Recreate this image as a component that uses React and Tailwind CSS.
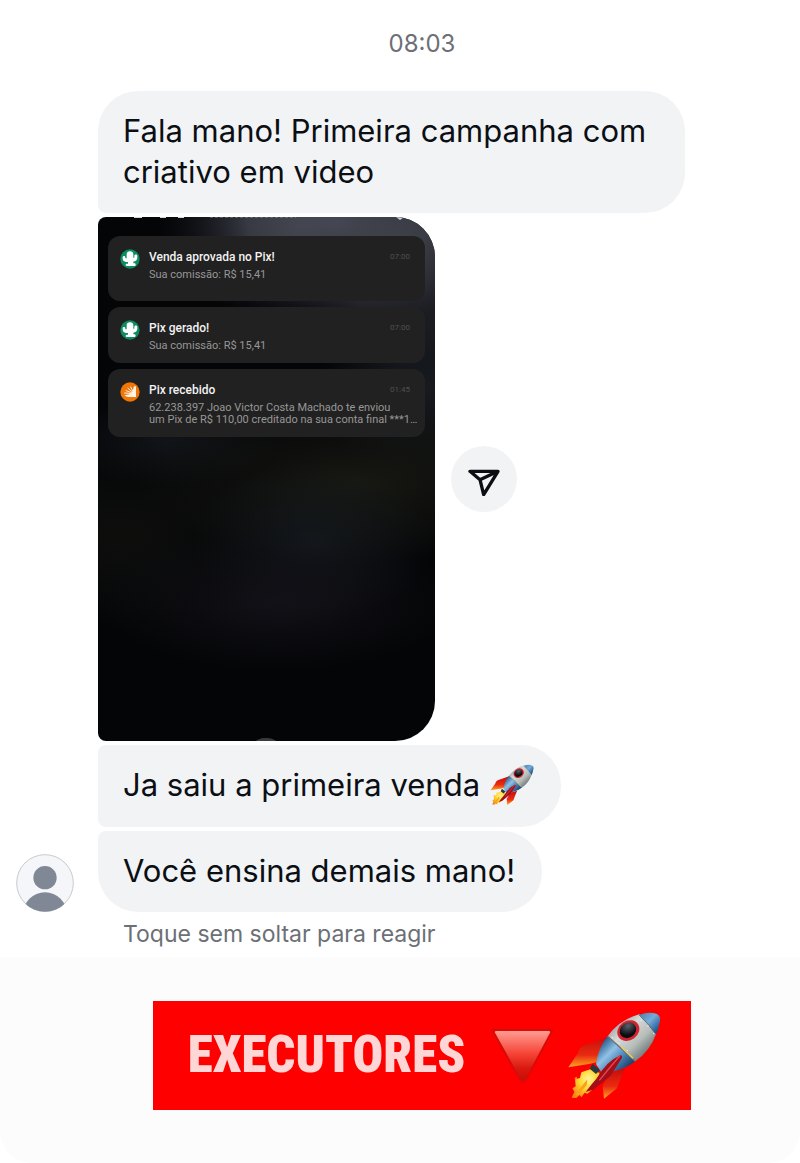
import React from 'react';

const notifications = [
    {
        icon: 'cactus',
        title: 'Venda aprovada no Pix!',
        time: '07:00',
        lines: ['Sua comissão: R$ 15,41'],
        spacing: 'pb-5',
    },
    {
        icon: 'cactus',
        title: 'Pix gerado!',
        time: '07:00',
        lines: ['Sua comissão: R$ 15,41'],
        spacing: 'pb-[11px]',
    },
    {
        icon: 'hand',
        title: 'Pix recebido',
        time: '01:45',
        lines: [
            '62.238.397 Joao Victor Costa Machado te enviou',
            'um Pix de R$ 110,00 creditado na sua conta final ***1…',
        ],
        spacing: 'pb-[11px]',
    },
];

const CactusIcon = () => (
    <svg className="size-5 shrink-0" viewBox="0 0 60 60" aria-hidden="true">
        <circle cx="30" cy="30" r="29" fill="#0c8c62" />
        <path
            d="M20 16c0-6 4-9 10-9s10 3 10 9v10h3v-6c0-5 9-5 9 0v6c0 7-5 11-12 12v5h4c4 0 4 8 0 8H20c-4 0-4-7 0-7h4v-5c-10 0-16-3-16-10v-4c0-5 8-5 8 0v3h4z"
            fill="#fff"
        />
    </svg>
);

const HandIcon = () => (
    <svg className="size-5 shrink-0" viewBox="0 0 60 60" aria-hidden="true">
        <circle cx="30" cy="30" r="29" fill="#ef7607" />
        <path d="M48 13v32H26c-5 0-9-2-13-5l15-3 10-10 4-14z" fill="#fff3e4" />
        <path
            d="M14 33l16 1M18 26l14 5M24 19l11 9M32 15l6 11"
            stroke="#fff3e4"
            strokeWidth="3"
            strokeLinecap="round"
        />
    </svg>
);

const Rocket = ({ className }) => (
    <svg className={className} viewBox="265 48 282 268" role="img" aria-label="foguete">
        <defs>
            <linearGradient id="hull" x1="380" y1="90" x2="490" y2="205" gradientUnits="userSpaceOnUse">
                <stop offset="0" stopColor="#8a9092" />
                <stop offset="0.35" stopColor="#d7dad6" />
                <stop offset="0.65" stopColor="#b7bdb9" />
                <stop offset="1" stopColor="#59676c" />
            </linearGradient>
            <linearGradient id="blue" x1="370" y1="140" x2="450" y2="220" gradientUnits="userSpaceOnUse">
                <stop offset="0" stopColor="#285c8c" />
                <stop offset="0.35" stopColor="#91c1e6" />
                <stop offset="0.65" stopColor="#4b85b9" />
                <stop offset="1" stopColor="#183b64" />
            </linearGradient>
            <linearGradient id="nose" x1="490" y1="55" x2="542" y2="105" gradientUnits="userSpaceOnUse">
                <stop offset="0" stopColor="#5187b5" />
                <stop offset="0.45" stopColor="#75acd8" />
                <stop offset="1" stopColor="#174d8b" />
            </linearGradient>
            <linearGradient id="fin" x1="0" y1="0" x2="0" y2="1">
                <stop offset="0" stopColor="#c80c0a" />
                <stop offset="0.6" stopColor="#ea2b12" />
                <stop offset="1" stopColor="#ffa71d" />
            </linearGradient>
            <radialGradient id="flame" cx="0.6" cy="0.35" r="0.7">
                <stop offset="0" stopColor="#fff59a" />
                <stop offset="0.5" stopColor="#ffd52b" />
                <stop offset="1" stopColor="#f68712" />
            </radialGradient>
            <radialGradient id="glass" cx="0.65" cy="0.25" r="0.6">
                <stop offset="0" stopColor="#59616b" />
                <stop offset="1" stopColor="#0a0c10" />
            </radialGradient>
        </defs>
        <path d="M388 126q-38 13-74 26-13 7-16 22l-29 43 62-10 25-6z" fill="url(#fin)" />
        <path d="M395 232l44-12q-12 27-24 60l-39 31-4-38z" fill="url(#fin)" />
        <path
            d="M337 222l26 12-4 24-20 28-13 10-8-3-10 14-5-7-10 9-14-1 8-18-6-10 10-6-2-21 15-4 4-17z"
            fill="url(#flame)"
        />
        <path d="M290 299l18-24 18-22-2 18-14 15-11 16zM286 250l8-5 1 8z" fill="#f9a01c" />
        <path d="M341 207l24 17-13 13-18-15z" fill="#283841" />
        <path d="M352 207q6-49 35-83l83 75q-39 31-100 36z" fill="url(#blue)" />
        <path d="M387 124q34-50 95-66l50 59q-18 52-62 82z" fill="url(#hull)" />
        <path d="M481 60q31-12 54-3 13 7 8 25-3 22-11 36-25-31-51-58z" fill="url(#nose)" />
        <path d="M481 60q28 24 51 58" fill="none" stroke="#596169" strokeWidth="2" />
        <path d="M387 124l83 75" stroke="#6e7375" strokeWidth="4" />
        <path d="M428 156l35 34" stroke="#efd05a" strokeWidth="4" />
        <g fill="#f9f7e9">
            <circle cx="401" cy="128" r="2" />
            <circle cx="421" cy="145" r="2" />
            <circle cx="446" cy="166" r="2" />
            <circle cx="488" cy="76" r="2" />
            <circle cx="508" cy="93" r="2" />
            <circle cx="525" cy="115" r="2" />
        </g>
        <ellipse cx="449" cy="107" rx="35" ry="29" transform="rotate(-35 449 107)" fill="#d12331" />
        <ellipse cx="448" cy="106" rx="26" ry="22" transform="rotate(-35 448 106)" fill="url(#glass)" />
        <path d="M425 181q8 1 4 9l-33 52-52 42-23 7q17-23 32-40 32-53 72-70z" fill="#a30e18" />
        <path d="M424 182l-34 40-28 34" fill="none" stroke="#e54a4c" strokeWidth="4" />
    </svg>
);

const RedTriangle = () => (
    <svg className="w-16 shrink-0" viewBox="30 92 194 174" role="img" aria-label="triângulo vermelho">
        <defs>
            <linearGradient id="triangle" x1="0" y1="0" x2="0" y2="1">
                <stop offset="0" stopColor="#ff9c92" />
                <stop offset="0.45" stopColor="#f64537" />
                <stop offset="0.75" stopColor="#d91910" />
                <stop offset="1" stopColor="#c90d08" />
            </linearGradient>
        </defs>
        <path d="M42 97h172q11 0 6 10l-80 149q-10 12-20 0L36 107q-5-10 6-10z" fill="#d90b06" />
        <path d="M49 104h159q7 0 3 7l-74 139q-7 10-14 0L46 111q-4-7 3-7z" fill="url(#triangle)" />
    </svg>
);

const SendIcon = () => (
    <svg className="w-8" viewBox="84 64 96 104" fill="none" stroke="#0b0f13" strokeWidth="10" strokeLinejoin="round" aria-hidden="true">
        <path d="M90 92h84l-43 70-11-45zM120 117l54-25" />
    </svg>
);

const Avatar = () => (
    <svg className="size-[58px] shrink-0" viewBox="47 45 174 174" role="img" aria-label="perfil">
        <clipPath id="face">
            <circle cx="134" cy="132" r="86" />
        </clipPath>
        <circle cx="134" cy="132" r="85" fill="#f4f6f9" stroke="#c8cacd" strokeWidth="3" />
        <g fill="#808896" clipPath="url(#face)">
            <circle cx="134" cy="116" r="35" />
            <circle cx="134" cy="226" r="66" />
        </g>
    </svg>
);

// Blurred phone wallpaper behind the notifications
const Wallpaper = () => (
    <svg className="absolute inset-0 size-full" viewBox="0 0 337 524" preserveAspectRatio="none" aria-hidden="true">
        <defs>
            <radialGradient id="glowTop">
                <stop offset="0" stopColor="#4b4d59" />
                <stop offset="0.5" stopColor="#383a43" />
                <stop offset="1" stopColor="#16181d" stopOpacity="0" />
            </radialGradient>
            <radialGradient id="glowOlive">
                <stop offset="0" stopColor="#171812" />
                <stop offset="1" stopColor="#171812" stopOpacity="0" />
            </radialGradient>
            <radialGradient id="glowSlate">
                <stop offset="0" stopColor="#171b20" />
                <stop offset="1" stopColor="#171b20" stopOpacity="0" />
            </radialGradient>
            <radialGradient id="glowPlum">
                <stop offset="0" stopColor="#121117" />
                <stop offset="1" stopColor="#121117" stopOpacity="0" />
            </radialGradient>
        </defs>
        <rect width="337" height="524" fill="#040507" />
        <ellipse cx="240" cy="5" rx="180" ry="110" fill="url(#glowTop)" />
        <ellipse cx="320" cy="60" rx="130" ry="120" fill="url(#glowTop)" opacity="0.4" />
        <ellipse cx="330" cy="170" rx="110" ry="100" fill="url(#glowSlate)" />
        <ellipse cx="70" cy="225" rx="110" ry="45" fill="url(#glowSlate)" opacity="0.7" />
        <ellipse cx="260" cy="265" rx="220" ry="80" fill="url(#glowOlive)" />
        <ellipse cx="20" cy="320" rx="150" ry="90" fill="url(#glowOlive)" opacity="0.5" />
        <ellipse cx="215" cy="325" rx="120" ry="80" fill="url(#glowSlate)" opacity="0.8" />
        <ellipse cx="180" cy="385" rx="180" ry="70" fill="url(#glowPlum)" />
        <path d="M36 0h8M62 0h6M80 0h6" stroke="#d5d6d9" strokeWidth="2" />
        <path d="M112 0h86" stroke="#8a8c95" strokeWidth="1" strokeDasharray="3 2" />
        <path d="M298 0h8l-4 3z" fill="#d5d6d9" />
        <ellipse cx="168" cy="526" rx="11" ry="5" fill="#3b3b3d" />
    </svg>
);

const Notification = ({ icon, title, time, lines, spacing }) => (
    <li className={`flex gap-[9px] rounded-xl bg-[#212121] pl-3 pr-[15px] pt-[13px] ${spacing}`}>
        {icon === 'cactus' ? <CactusIcon /> : <HandIcon />}
        <div className="min-w-0 flex-1">
            <div className="flex items-center justify-between leading-4">
                <h3 className="text-xs font-medium leading-4 text-[#f2f2f2]">{title}</h3>
                <time className="text-[8px] text-[#505050]">{time}</time>
            </div>
            <p className="pt-1 text-[11px] leading-3 text-[#979797]">
                {lines.map((line) => (
                    <span key={line} className="block whitespace-nowrap">{line}</span>
                ))}
            </p>
        </div>
    </li>
);

const Bubble = ({ className, children }) => (
    <div className={`w-fit bg-[#f2f3f5] pb-[21px] pl-[25px] pr-[27px] pt-[19px] text-[31px] leading-[41px] text-[#0b0f14] ${className}`}>
        {children}
    </div>
);

const App = () => {
    return (
        <main className="flex min-h-screen flex-col bg-white font-['Inter',sans-serif]">
            <time className="pl-11 pt-7 text-center text-2xl leading-8 text-[#6c7076]">08:03</time>

            <section className="flex items-end gap-6 pl-4 pr-6 pt-[31px]">
                <Avatar />
                <div className="flex min-w-0 flex-1 flex-col gap-1">
                    <Bubble className="max-w-[587px] rounded-[40px] rounded-bl-lg">
                        Fala mano! Primeira campanha com criativo em video
                    </Bubble>

                    <div className="flex items-center gap-4">
                        <div className="relative aspect-[337/524] w-[337px] overflow-hidden rounded-l-lg rounded-r-[40px] font-['Roboto',sans-serif]">
                            <Wallpaper />
                            <ul className="relative flex flex-col gap-[6px] px-[10px] pt-[19px]">
                                {notifications.map((item) => (
                                    <Notification key={item.title} {...item} />
                                ))}
                            </ul>
                        </div>
                        <button
                            type="button"
                            aria-label="Enviar"
                            className="flex size-[66px] items-center justify-center rounded-full bg-[#f2f3f5]"
                        >
                            <SendIcon />
                        </button>
                    </div>

                    <Bubble className="flex items-center gap-[10px] rounded-l-lg rounded-r-[40px]">
                        Ja saiu a primeira venda
                        <Rocket className="w-11" />
                    </Bubble>
                    <Bubble className="rounded-[40px] rounded-tl-lg">Você ensina demais mano!</Bubble>
                </div>
            </section>

            <p className="pb-[7px] pl-[123px] pt-[6px] text-[23px] leading-8 text-[#6c7076]">
                Toque sem soltar para reagir
            </p>

            <footer className="flex flex-1 items-start justify-center rounded-b-[32px] bg-[#fcfcfc] pb-[50px] pl-11 pt-11">
                <div className="flex items-center bg-[#ff0000] py-[10px] pl-[35px] pr-[30px]">
                    <h1 className="font-['Roboto_Condensed','Liberation_Sans_Narrow',sans-serif] text-[51px] leading-[86px] font-black text-[#ffd6d6]">
                        EXECUTORES
                    </h1>
                    <div className="flex items-center gap-[13px] pl-[25px]">
                        <RedTriangle />
                        <Rocket className="w-[94px]" />
                    </div>
                </div>
            </footer>
        </main>
    );
};

export default App;
